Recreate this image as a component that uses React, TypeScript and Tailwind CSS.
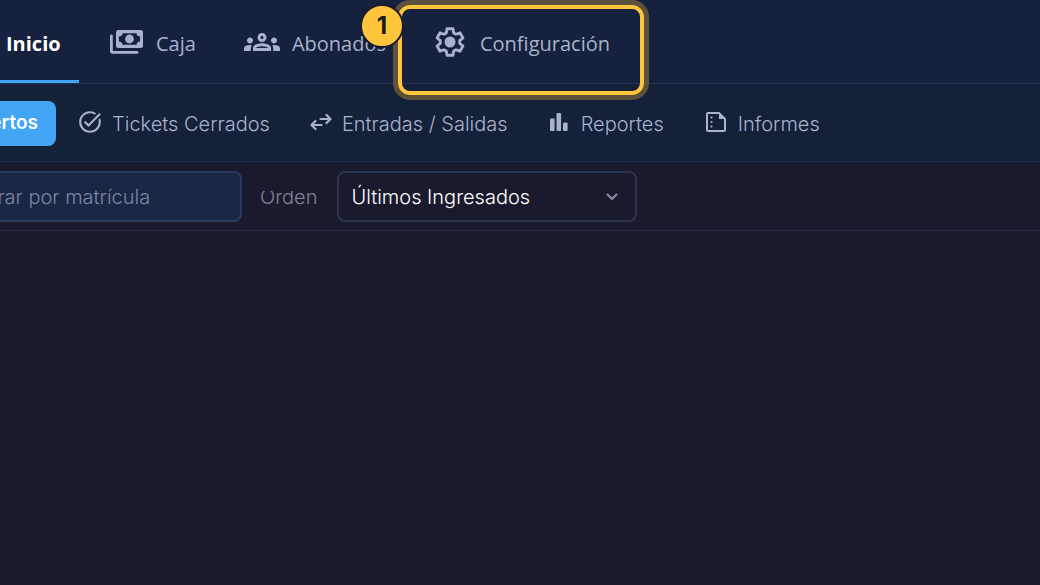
import { useState } from 'react';
import type { ReactNode } from 'react';
import { MdOutlineGroups, MdTaskAlt } from 'react-icons/md';

function PaymentsIcon() {
    return (
        <svg width="33" height="24" viewBox="0 0 33 24" fill="none" aria-hidden="true">
            <path d="M1.4 6V21a1.4 1.4 0 0 0 1.4 1.4H27" stroke="currentColor" strokeWidth="2.8" strokeLinecap="round" />
            <path
                fill="currentColor"
                fillRule="evenodd"
                d="M8.5 0h22A2.5 2.5 0 0 1 33 2.5v13a2.5 2.5 0 0 1-2.5 2.5h-22A2.5 2.5 0 0 1 6 15.5v-13A2.5 2.5 0 0 1 8.5 0zM12.5 3.2a3.7 3.7 0 0 1-3.6 3.3v5a3.7 3.7 0 0 1 3.6 3.3h14a3.7 3.7 0 0 1 3.6-3.3v-5a3.7 3.7 0 0 1-3.6-3.3z"
            />
            <circle cx="19.5" cy="9" r="4.4" fill="currentColor" />
        </svg>
    )
}

function SettingsIcon() {
    return (
        <svg width="36" height="36" viewBox="-18 -18 36 36" aria-hidden="true">
            <path
                fill="none"
                stroke="currentColor"
                strokeWidth="2.9"
                strokeLinejoin="round"
                d="M-3.7-9.1L-3-13.2H3L3.7-9.1L6.03-7.75L9.93-9.2L12.93-4L9.73-1.35V1.35L12.93 4L9.93 9.2L6.03 7.75L3.7 9.1L3 13.2H-3L-3.7 9.1L-6.03 7.75L-9.93 9.2L-12.93 4L-9.73 1.35V-1.35L-12.93-4L-9.93-9.2L-6.03-7.75z"
            />
            <circle r="5.5" fill="currentColor" />
        </svg>
    )
}

function ArrowsIcon() {
    return (
        <svg width="22" height="18" viewBox="0 0 22 18" fill="none" stroke="currentColor" strokeWidth="2.2" strokeLinecap="round" strokeLinejoin="round" aria-hidden="true">
            <path d="M10.5 6H20M16.5 2l4 4-4 4" />
            <path d="M11.5 12H2M5.5 8l-4 4 4 4" />
        </svg>
    )
}

function ChartIcon() {
    return (
        <svg width="18" height="18" viewBox="0 0 18 18" fill="currentColor" aria-hidden="true">
            <rect x="0" y="5.5" width="4.6" height="12.5" rx="1" />
            <rect x="6.5" y="0" width="4.6" height="18" rx="1" />
            <rect x="13" y="9.5" width="4.6" height="8.5" rx="1" />
        </svg>
    )
}

function ReportIcon() {
    return (
        <svg width="20" height="20" viewBox="0 0 20 20" aria-hidden="true">
            <path d="M2 1h11l6 6v11a1 1 0 0 1-1 1H2a1 1 0 0 1-1-1V2a1 1 0 0 1 1-1z" fill="none" stroke="currentColor" strokeWidth="2" />
            <path d="M13 1l6 6h-6z" fill="currentColor" />
            <circle cx="5.5" cy="5.5" r="1.1" fill="currentColor" />
            <circle cx="5.5" cy="10" r="1.1" fill="currentColor" />
            <circle cx="5.5" cy="14.5" r="1.1" fill="currentColor" />
        </svg>
    )
}

interface SubItemProps {
    icon: ReactNode;
    label: string;
    className: string;
}

function SubItem({ icon, label, className }: SubItemProps) {
    return (
        <button type="button" className={`flex items-center whitespace-nowrap ${className}`}>
            <span className="-mt-1">{icon}</span>
            {label}
        </button>
    )
}

export default function App() {
    const [plate, setPlate] = useState('');

    return (
        <div className="min-h-screen w-full overflow-hidden bg-[#1a1a2e] font-['Inter',sans-serif] text-xl font-light text-[#a8b2cc]">
            {/* menu principal */}
            <nav className="flex h-[84px] border-b border-[#223252] bg-[#16213e] font-['Open_Sans','Noto_Sans',sans-serif] font-normal">
                <button type="button" className="flex w-[79px] items-center border-b-3 border-[#42a5f5] pt-2 pl-[6px] font-bold text-white">
                    Inicio
                </button>
                <button type="button" className="ml-[31px] flex items-center gap-[13px] pt-1">
                    <span className="-mt-1"><PaymentsIcon /></span>
                    Caja
                </button>
                <button type="button" className="ml-12 flex items-center gap-3 pt-1">
                    <MdOutlineGroups size={36} className="-mt-1" />
                    Abonados
                </button>
                <button type="button" className="relative ml-[46px] flex items-center gap-3 pt-1">
                    <span className="-mt-1"><SettingsIcon /></span>
                    Configuración
                    <span className="absolute -inset-x-[34px] top-[5px] h-[90px] rounded-xl border-4 border-[#ffc53d] shadow-[0_0_0_5px_rgba(255,197,61,0.3)]" />
                    <span className="absolute top-1 -left-[72px] flex size-11 items-center justify-center rounded-full border-2 border-[#1a1a2e] bg-[#ffc53d] font-['Inter',sans-serif] text-2xl font-bold text-[#1a1a1a]">
                        1
                    </span>
                </button>
            </nav>

            {/* submenu de tickets */}
            <nav className="flex h-[78px] items-center border-b border-[#223252] bg-[#152039] pt-0.5">
                <button type="button" className="flex h-[45px] w-14 items-center justify-end overflow-hidden rounded-r-lg bg-[#42a5f5] pr-[18px] text-[19px] font-semibold text-white">
                    Abiertos
                </button>
                <SubItem icon={<MdTaskAlt size={26} />} label="Tickets Cerrados" className="ml-[21px] gap-[9px]" />
                <SubItem icon={<ArrowsIcon />} label="Entradas / Salidas" className="ml-10 gap-[10px]" />
                <SubItem icon={<ChartIcon />} label="Reportes" className="ml-[42px] gap-[13px]" />
                <SubItem icon={<ReportIcon />} label="Informes" className="ml-[42px] gap-3" />
            </nav>

            {/* filtros */}
            <div className="flex h-[69px] items-center border-b border-[#25304a]">
                <input
                    type="text"
                    aria-label="Filtrar por matrícula"
                    placeholder="Filtrar por matrícula"
                    value={plate}
                    onChange={(e) => setPlate(e.target.value)}
                    className="-ml-11 h-[51px] w-[286px] rounded-lg border-2 border-[#2a3a5e] bg-[#1a2744] px-3 pt-0.5 placeholder:text-[#7a86a3]"
                />
                <label htmlFor="orden" className="mt-2 ml-[18px] h-[18px] overflow-hidden leading-3 text-[#7e8296]">
                    Orden
                </label>
                <div className="relative ml-5">
                    <select id="orden" className="h-[51px] w-[300px] appearance-none rounded-lg border-2 border-[#2a3553] bg-[#1a1a2e] px-3 pt-0.5 text-white">
                        <option>Últimos Ingresados</option>
                    </select>
                    <svg width="12" height="8" viewBox="0 0 12 8" className="pointer-events-none absolute top-[22px] right-[19px] text-[#8a90a6]" aria-hidden="true">
                        <path d="M1.5 1.5L6 6l4.5-4.5" fill="none" stroke="currentColor" strokeWidth="2" strokeLinecap="round" strokeLinejoin="round" />
                    </svg>
                </div>
            </div>
        </div>
    )
}
